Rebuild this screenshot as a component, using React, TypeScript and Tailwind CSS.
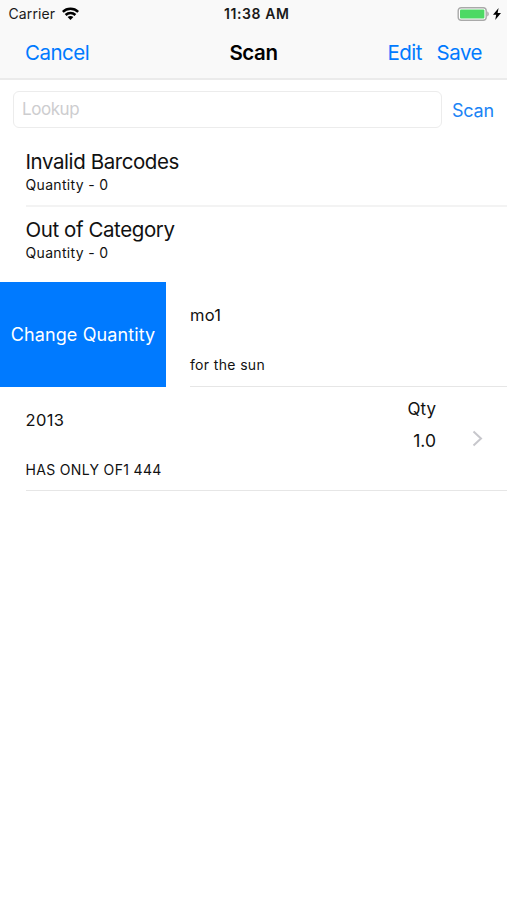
import React from "react";

function StatusBar() {
  return (
    <div className="flex h-[27px] items-center justify-between pl-[8.5px] pr-[6px] text-[14px] leading-[27px] text-[#1a1a1a]">
      <div className="flex w-[150px] items-center gap-[7px]">
        <span className="tracking-[0.12px]">Carrier</span>
        <svg width="17" height="13" viewBox="0 0 17 13" fill="none" stroke="#000" strokeWidth="2.5">
          <path d="M0.8 4.9C5 0.7 12 0.7 16.2 4.9" />
          <path d="M3.6 8C6.4 5.2 10.6 5.2 13.4 8" />
          <path d="M8.5 12.9L5.6 10C7.3 8.5 9.7 8.5 11.4 10Z" fill="#000" stroke="none" />
        </svg>
      </div>
      <span className="ml-[4px] font-semibold tracking-[0.6px]">11:38 AM</span>
      <div className="flex w-[150px] items-center justify-end gap-[4px]">
        <svg width="32" height="14" viewBox="0 0 32 14">
          <rect x="1.2" y="0.7" width="28" height="12.6" rx="3" fill="#fff" stroke="#a9a9a9" strokeWidth="1.4" />
          <rect x="3" y="2.5" width="24.4" height="9" rx="1" fill="#4cd964" />
          <path d="M30.3 4.6C32.2 5.2 32.2 8.8 30.3 9.4Z" fill="#a0a0a0" />
        </svg>
        <svg width="8" height="12" viewBox="0 0 8 12">
          <path d="M5.6 0L0 6.8H3.2L2.2 12L8 4.9H4.6Z" fill="#000" />
        </svg>
      </div>
    </div>
  );
}

function NavBar() {
  return (
    <div className="flex h-[52px] items-center justify-between px-[25px] text-[20.5px] text-[#007aff]">
      <span className="w-[110px] tracking-[-0.5px]">Cancel</span>
      <span className="font-semibold tracking-[-0.4px] text-black">Scan</span>
      <div className="flex w-[110px] justify-end gap-[14.5px] tracking-[-0.5px]">
        <span>Edit</span>
        <span>Save</span>
      </div>
    </div>
  );
}

function SummaryRow({ title, divider }: { title: string; divider?: boolean }) {
  return (
    <div className={divider ? "ml-[25.5px] h-[68px] border-b-2 border-[#f3f3f3] pt-[9px]" : "ml-[25.5px] h-[75px] pt-[9px]"}>
      <div className="text-[20.5px] leading-[27px] tracking-[-0.42px] text-[#111]">{title}</div>
      <div className="text-[14px] leading-[20px] tracking-[0.33px] text-[#111]">Quantity - 0</div>
    </div>
  );
}

export default function App() {
  return (
    <div className="h-[900px] w-[507px] overflow-hidden whitespace-nowrap bg-white font-['Inter',sans-serif]">
      <header className="h-[80px] border-b-2 border-[#ebebeb] bg-[#f9f9f9]">
        <StatusBar />
        <NavBar />
      </header>
      <div className="flex h-[59px] items-start pl-[13px] pt-[11px]">
        <div className="h-[37px] w-[429px] rounded-[6px] border-[1.5px] border-[#ececec] pl-[8px] text-[17px] leading-[35px] tracking-[-0.45px] text-[#cdcdcf]">
          Lookup
        </div>
        <span className="ml-[10px] text-[18px] leading-[39px] tracking-[-0.2px] text-[#1a84f5]">Scan</span>
      </div>
      <SummaryRow title="Invalid Barcodes" divider />
      <SummaryRow title="Out of Category" />
      <div className="flex h-[105px]">
        <div className="flex w-[166px] items-center justify-center bg-[#007aff] text-[18px] leading-[27px] tracking-[0.12px] text-white">
          Change Quantity
        </div>
        <div className="ml-[24px] flex-1 border-b border-[#e6e6e6] text-[#111]">
          <div className="mt-[21px] text-[16.5px] leading-[24px] tracking-[0.2px]">mo1</div>
          <div className="mt-[28px] text-[14px] leading-[20px] tracking-[0.35px]">for the sun</div>
        </div>
      </div>
      <div className="ml-[25.5px] flex h-[104px] border-b border-[#e6e6e6] text-[#111]">
        <div className="flex-1">
          <div className="mt-[21px] text-[16.5px] leading-[24px] tracking-[0.35px]">2013</div>
          <div className="mt-[28px] text-[14px] leading-[20px] tracking-[0.33px]">HAS ONLY OF1 444</div>
        </div>
        <div className="mt-[7px] text-right text-[17px] leading-[31px]">
          <div>Qty</div>
          <div className="text-[17.5px]">1.0</div>
        </div>
        <svg className="ml-[36px] mr-[24px] mt-[43px]" width="11" height="17" viewBox="0 0 11 17" fill="none" stroke="#c7c7cc" strokeWidth="2">
          <path d="M1.5 1.5L9 8.5L1.5 15.5" />
        </svg>
      </div>
    </div>
  );
}
